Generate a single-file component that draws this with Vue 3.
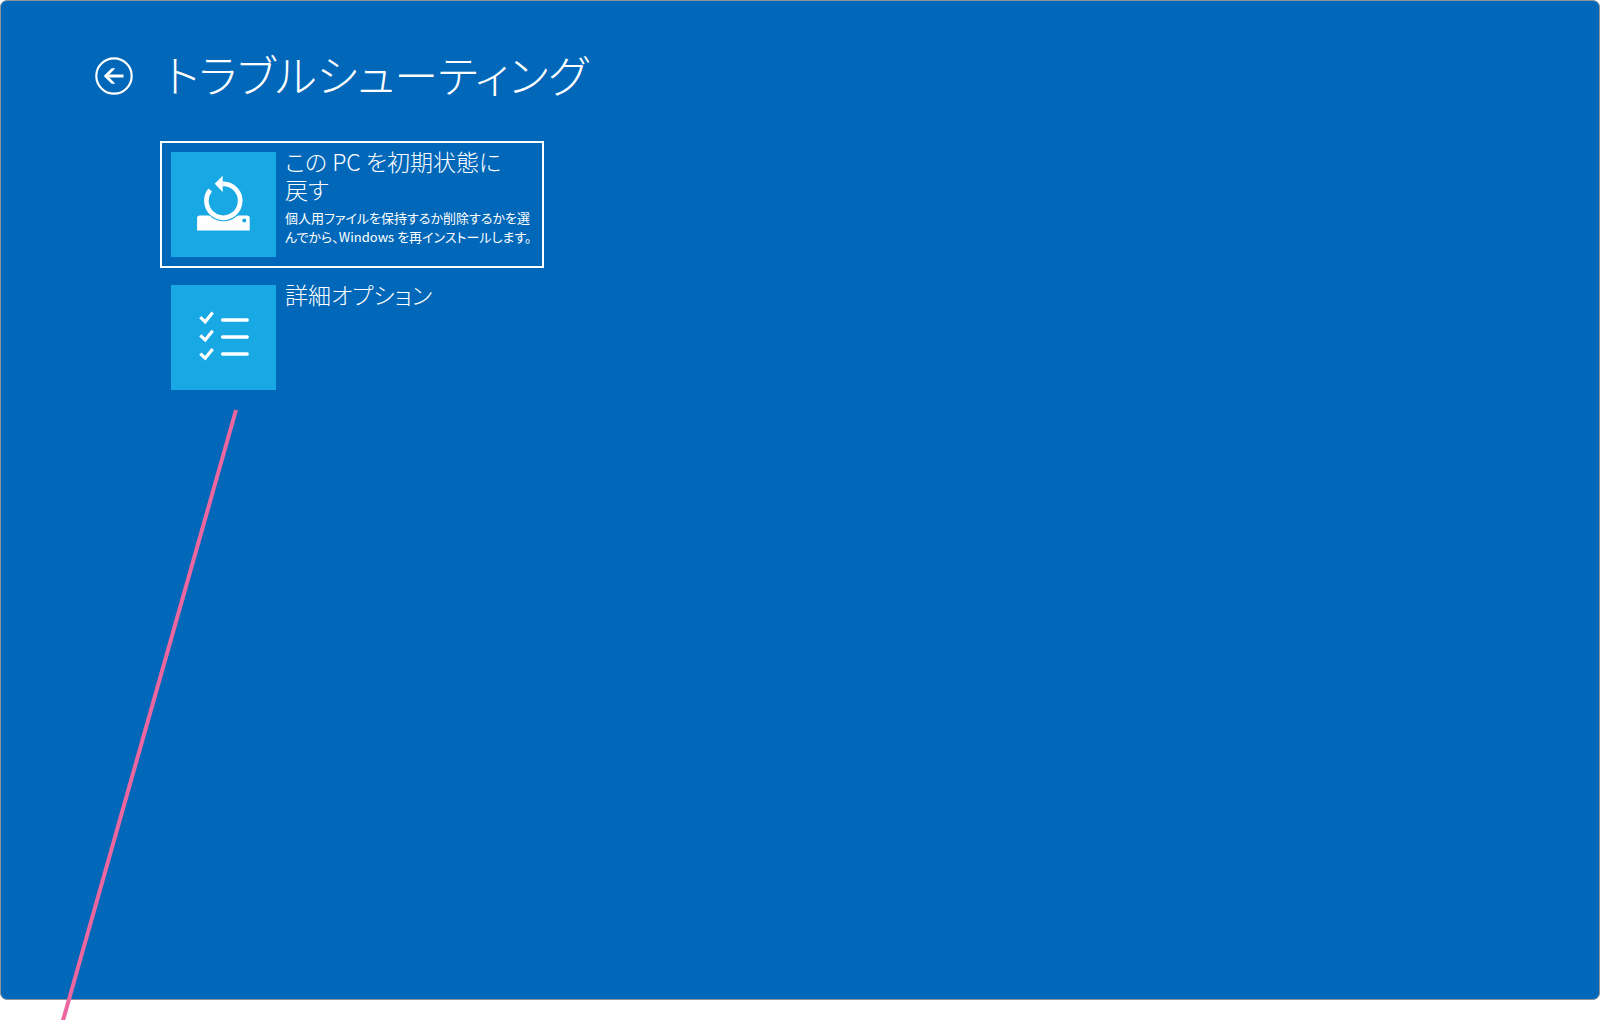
<script setup>
const options = [
  {
    id: 'reset',
    title: 'この PC を初期状態に\n戻す',
    text: '個人用ファイルを保持するか削除するかを選\nんでから、Windows を再インストールします。',
    selected: true,
  },
  { id: 'advanced', title: '詳細オプション', text: '', selected: false },
]
const rows = [0, 1, 2]
</script>

<template>
  <div class="page">
    <main class="screen">
      <header class="head">
        <button class="back" type="button" aria-label="戻る">
          <svg viewBox="0 0 38 38" width="38" height="38" fill="none" stroke="#fff">
            <circle cx="19" cy="19" r="17.7" stroke-width="2.2" />
            <path d="M28.5 19H11" stroke-width="3" />
            <path d="M20.3 11.2h-3.7L8.7 19l7.9 7.8h3.7L13 19z" fill="#fff" stroke="none" />
          </svg>
        </button>
        <h1 class="title">トラブルシューティング</h1>
      </header>

      <div class="options">
        <button
          v-for="o in options"
          :key="o.id"
          type="button"
          class="option"
          :class="{ selected: o.selected }"
        >
          <span class="tile">
            <svg v-if="o.id === 'reset'" viewBox="0 0 105 105" width="105" height="105">
              <path d="M28.7 63.5h10.2a20.5 20.5 0 0 0 27 0h10.2a2.6 2.6 0 0 1 2.6 2.6v12.4H26.1V66.1a2.6 2.6 0 0 1 2.6-2.6z" fill="#fff" />
              <circle cx="52.5" cy="49" r="20.3" fill="#18a8e4" />
              <path d="M39.2 38.1A16.9 16.9 0 1 0 51.5 31.9" fill="none" stroke="#fff" stroke-width="4.7" />
              <path d="M43.7 31.8l8-8v16.3z" fill="#fff" />
              <circle cx="73.3" cy="68.6" r="2" fill="#18a8e4" />
            </svg>
            <svg v-else viewBox="0 0 105 105" width="105" height="105" fill="none" stroke="#fff">
              <g v-for="r in rows" :key="r">
                <path :d="`M29.3 ${32.2 + r * 18.2}l4.9 4.6 7.5-9.3`" stroke-width="3.2" />
                <path :d="`M51.6 ${35 + r * 17}h24.6`" stroke-width="3.4" stroke-linecap="round" />
              </g>
            </svg>
          </span>
          <span class="body">
            <span class="name">{{ o.title }}</span>
            <span v-if="o.text" class="desc">{{ o.text }}</span>
          </span>
        </button>
      </div>
    </main>
    <svg class="pointer" width="240" height="1020" viewBox="0 0 240 1020" aria-hidden="true">
      <path d="M236 410L62 1024" stroke="#ec669f" stroke-width="4" />
    </svg>
  </div>
</template>

<style>
body {
  margin: 0;
  background: #fff;
}
</style>

<style scoped>
.page {
  position: relative;
  box-sizing: border-box;
  min-height: 100vh;
  padding-bottom: 20px;
  display: flex;
  overflow: hidden;
  font-family: "Noto Sans CJK JP", "Open Sans", sans-serif;
  color: #fff;
}
.screen {
  box-sizing: border-box;
  flex: 1;
  padding: 40px 94px;
  background: #0067b9;
  border: 1px solid #8a949c;
  border-radius: 7px;
}
.head {
  display: flex;
  align-items: center;
  gap: 32px;
  height: 70px;
}
.back {
  display: flex;
  padding: 0;
  border: 0;
  background: none;
}
.title {
  margin: 0;
  padding-bottom: 4px;
  font-size: 44px;
  line-height: 66px;
  font-weight: 300;
  font-feature-settings: "palt";
  white-space: nowrap;
}
.options {
  display: flex;
  flex-direction: column;
  align-items: flex-start;
  gap: 6px;
  margin: 30px 0 0 65px;
}
.option {
  box-sizing: border-box;
  display: flex;
  align-items: flex-start;
  gap: 9px;
  width: 384px;
  padding: 9px;
  border: 2px solid transparent;
  background: none;
  color: inherit;
  font: inherit;
  text-align: left;
}
.selected {
  border-color: #fff;
}
.tile {
  flex: none;
  display: flex;
  background: #18a8e4;
}
.body {
  display: flex;
  flex-direction: column;
  gap: 5px;
  font-feature-settings: "palt";
  white-space: pre;
}
.name {
  margin-top: -5px;
  font-size: 23px;
  line-height: 28px;
  font-weight: 300;
}
.desc {
  font-size: 13px;
  line-height: 19px;
  font-weight: 400;
}
.pointer {
  position: absolute;
  top: 0;
  left: 0;
  pointer-events: none;
}
</style>
